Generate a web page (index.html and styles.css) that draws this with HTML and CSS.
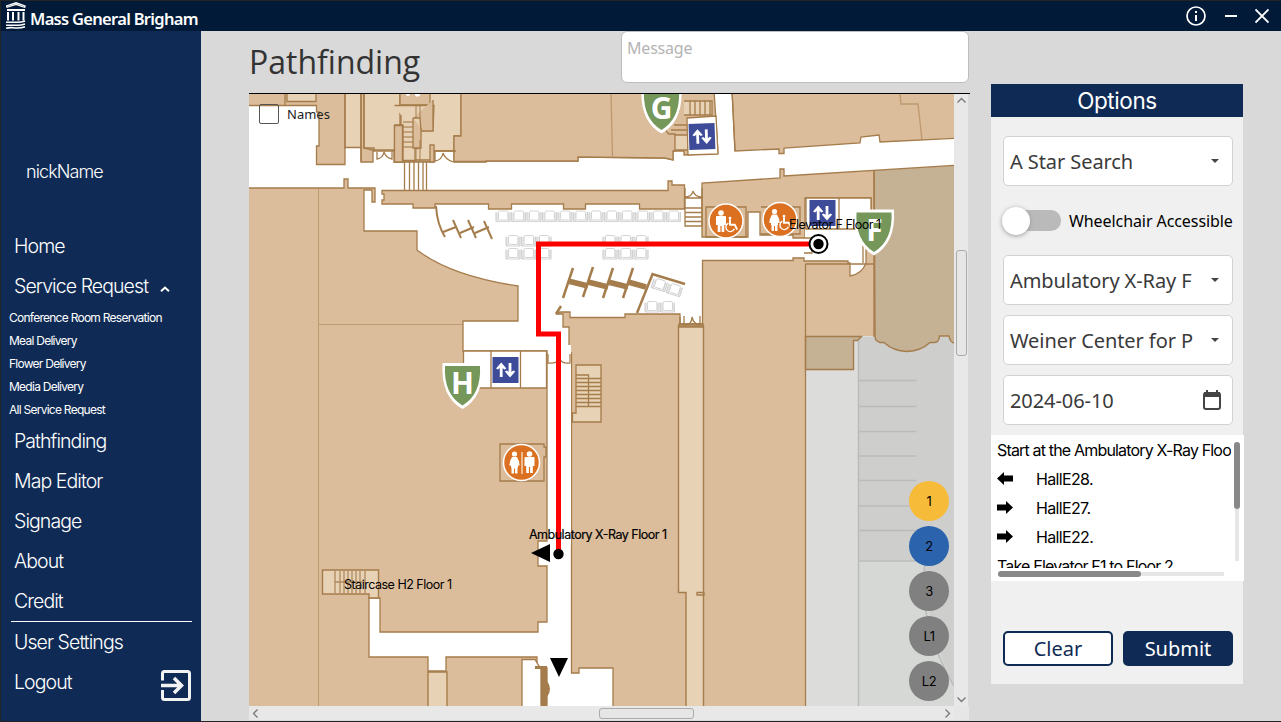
FILE: index.html
```html
<!DOCTYPE html>
<html lang="en">
<head>
<meta charset="utf-8">
<title>Pathfinding</title>
<link rel="stylesheet" href="styles.css">
</head>
<body>
<div class="window">
  <header class="titlebar">
    <svg class="logo" width="20" height="28" viewBox="0 0 20 28" fill="#fff" stroke="#fff"><path d="M0.5 5V4L10 .8 19 4v1.5M.5 5.500 10 2.500l9 3" fill="none" stroke-width="1.3"/><path d="M1 7h18v2H1zM1 10h2v8.500H1zM6 10h2v8.500H6zM11.500 10h2v8.500h-2zM16.500 10h2v8.500h-2z" stroke="none"/><path d="M0 20.300h12q3 0 7-1.200M0 23.200h12q3 0 7-1.200M0 26.300q3-1 7-.6 7 .8 12-1" fill="none" stroke-width="1.6"/></svg>
    <span class="brand">Mass General Brigham</span>
    <div class="controls">
      <svg width="20" height="20" viewBox="0 0 20 20"><circle cx="10" cy="10" r="9" fill="none" stroke="#fff" stroke-width="1.7"/><path d="M9 5h2v2H9zM9 9h2v6H9z" fill="#fff"/></svg>
      <svg width="12" height="20" viewBox="0 0 12 20"><path d="M0 9h12v2H0z" fill="#fff"/></svg>
      <svg width="14" height="20" viewBox="0 0 14 20"><path d="M.5 3.500l13 13M13.500 3.500l-13 13" stroke="#fff" stroke-width="1.8"/></svg>
    </div>
  </header>
  <div class="body">
    <nav class="sidebar">
      <div class="nick">nickName</div>
      <a class="item">Home</a>
      <a class="item service">Service Request<svg width="10" height="6" viewBox="0 0 10 6"><path d="M1 5.300 5 1.500l4 3.800" fill="none" stroke="#fff" stroke-width="1.900"/></svg></a>
      <div class="subs">
        <a class="sub">Conference Room Reservation</a>
        <a class="sub">Meal Delivery</a>
        <a class="sub">Flower Delivery</a>
        <a class="sub">Media Delivery</a>
        <a class="sub">All Service Request</a>
      </div>
      <a class="item">Pathfinding</a>
      <a class="item">Map Editor</a>
      <a class="item">Signage</a>
      <a class="item">About</a>
      <a class="item">Credit</a>
      <hr class="rule">
      <a class="item">User Settings</a>
      <a class="item logout">Logout<svg width="30" height="31" viewBox="0 0 30 31" fill="none" stroke="#f3f3f3" stroke-width="3"><path d="M1.500 10.500v-7q0-2 2-2h23q2 0 2 2v24q0 2-2 2h-23q-2 0-2-2v-7.500"/><path d="M0 15.500h20M13 8l7.500 7.500L13 23" stroke-width="3.500"/></svg></a>
    </nav>
    <main class="center">
      <div class="heading">
        <h1>Pathfinding</h1>
        <div class="message">Message</div>
      </div>
      <section class="mapframe">
        <div class="mapview">
          <svg class="map" width="705" height="612" viewBox="249 94 705 612">
            <defs>
              <g id="seat" fill="none" stroke="#cfcfcf" stroke-width=".9"><path d="M0 2h3v8H0zM12 2h3v8h-3z" fill="#e6e6e6" stroke="none"/><rect x="3" y=".5" width="9.500" height="9" rx="1.500"/><path d="M.5 1.500v9.500h14V1.500M3 9.500l-2 1.500M12.500 9.500l2 1.500"/></g>
              <g id="lift"><rect width="26" height="26" fill="#3d4b99"/><path d="M8.700 20V9M17.500 6v11" stroke="#fff" stroke-width="2.800"/><path d="M3.500 11.500 8.700 5.500l5.200 6-2 1-3.200-2.500-3.200 2.500zM12.300 14.500l5.200 6 5.200-6-2-1-3.200 2.500-3.200-2.500z" fill="#fff"/></g>
              <g id="shield"><path d="M-20-22H20Q22 12 0 24Q-22 12-20-22z" fill="#fff"/><path d="M-17.500-19H17.500Q19 9 0 20.500Q-19 9-17.500-19z" fill="#75975a"/></g>
              <g id="man" fill="#fff"><circle r="2.800"/><path d="M-5 4q0-1 1-1h8q1 0 1 1v8h-1.700v7H.6v-6h-1.200v6h-2.700v-7H-5z"/></g>
              <g id="woman" fill="#fff"><circle r="2.600"/><path d="M-2.500 3h5q2.500 4 2.700 8.500H3.500v2H3v6H.5v-5h-1v5H-3v-6h-.5v-2h-1.700Q-5 7-2.500 3z"/></g>
              <g id="chair"><path d="M0-6v7h6l3 6" fill="none" stroke="#fff" stroke-width="2.400"/><circle cx="0" cy="-7.500" r="1.700" fill="#fff"/><path d="M-2-1a5.500 5.500 0 1 0 7.500 7" fill="none" stroke="#fff" stroke-width="1.700"/></g>
            </defs>
            <rect x="249" y="94" width="705" height="612" fill="#dbbc9b"/>
            <path d="M318.500 188V706M318 324.500h146" stroke="#bd9c73" fill="none"/>
            <path class="grey" d="M805 336h149V706H805z"/>
            <path fill="#cececd" d="M858 337h96V706h-96z"/>
            <path fill="#d5d8d5" d="M858.500 560.500H925q-1 65 29 124V706h-95.500z"/>
            <path d="M858.500 341V706M858.500 380.500h58M858.500 406.500h58M858.500 431.500h58M858.500 456h58M858.500 480.500h58M858.500 506h55M858.500 530.500h57M858.500 561h65M925 562q-8 60 29 124" fill="none" stroke="#babcba" stroke-width="1.500"/>
            <path class="khaki wallline" d="M874 160H960V343h-6q-4-1-5-7h-9.500q-.5 7-5.500 6.500h-4q-9 8.500-23 9-14-.5-23-9h-4q-5-1.500-5-6.500z"/>
            <path class="khaki wallline" d="M805.500 336.500h56l-4 4h-4v29h-48z"/>
            <g class="wall">
              <path class="cream" d="M287 90h29v11.500h-29zM345 90h16v58h-16zM364 90h36v35h-5v26h-19l-12-3zM402 90h59v46h-7v15h-22v11h-30z"/>
            </g>
            <path class="white" d="M243 105.500H316.500V112H319V146H316.500V164.500H345V147.500H361V162H373V150H394V162H434V151H454V162H486V161H578V157L665 158 673 160V151H684V155L718 153 714 90H732L735 151 779 149V153.500H784V148L860 143 861 137 879 135 880 142 960 138V165L784 176V169H780V178L702 183V237H748V212H760V235H793V238H805V198H871V229H866V263Q862 274 850 276V263H848V261H804V258H793V260.500H702.500V324H680V314H625V317.500H570V312H560L556 314H563V327H569V353H571.500V673H579V668H613V712H547V668H537V657H446V671H428V657H369V598H380V632H538V622H547V566H538V541H547V351H463V321H518V286Q451 276 417 250V231H364V190H372V202H375V188H348V179H344V188H243Z"/>
            <path class="wall" d="M382 190.500H668V181h4v4h12.500v24h-45v-5h-54v5h-22v-5h-52v5h-23v-5H435v4h-22v-4h-31v-4h2v-6h-2z"/>
            <path class="stroke" d="M285 94v11M345 94v53M361 94v68M364 94v54h10v3M394.500 125v37h8v-37M402.500 94v68M402.500 160h28v2M732 90l3 61"/>
            <path class="stroke cream" d="M671 135h17v15h-17zM671 130h16M674 125h13M684 101h28v14h-28M690 101v14M695 101v14M700 101v14M705 101v14M710 101v14"/>
            <path class="wall" d="M400 94v11h30V94"/>
            <circle cx="408" cy="94" r="2" fill="#fff"/><circle cx="417.500" cy="94" r="2.600" fill="#fff"/>
            <path class="stroke cream" d="M394.500 105.500h39.500l-1 25h-15v18h-3v12h-12V125h-2v-10"/>
            <path class="wall" d="M413 118h7l1 13h12v-31M413 118v30h8v-20M394.500 125.500h8v36.500h-8zM430 145h4v17h-4z"/>
            <path class="wall" d="M461 90V136h-7v25.500h32V161h92v-4l87 1 8 2v-9h2v-17h-6l-3-3V90z"/>
            <path class="stroke" d="M611 94l1.500 62M900 94l1 10h17l4 36" opacity=".55"/>
            <path class="stroke" d="M403 122h10M403 127h10M403 132h10M403 137h10M403 142h10M403 147h10M416 105v13M420 105v13M416 149v12M420 140v21" opacity=".75"/>
            <path class="stroke" d="M404.500 162v28M409.500 162v28M414 162v28M418.500 162v28M423 162v28M426.500 162v28"/>
            <path class="stroke" d="M373 151h22M377 152v7q6-1 7-7q2 6 8 7v-8M434 151h22M435 152v9q7-1 8-8q2 6 10 9"/>
            <path class="stroke thick" d="M436 206q1 18 9 31M453 220l8 18M468 220l8 18M484 221l8 18M443 232l13-5M460 233l14-6M475 233l14-6"/>
            <path class="white" d="M687 118l29-2 2 38-30 1z"/>
            <path class="stroke" d="M685 198v28h17v-28zM685 208h17M685 212.500h17M685 217h17M685 221.500h17M685 188v9q7 0 8-6q2 6 9 6v-9"/>
            <path fill="#fff" d="M805 229h60v31h-60z"/>
            <path class="white" d="M806 198h65v31h-65zM839 198v31"/>
            <path class="stroke" d="M874 171V337M805.500 264H874M805.500 264V706M706 207h40v30h-40zM761 207h39v27h-39M804 253h8v-5M805 238h7v5M865 229v16h-2v18"/>
            <path class="white" d="M463.500 351h83v37h-83zM491 351v37M520.500 351v37"/>
            <path fill="#fff" d="M548 345h23v200h-23z"/>
            <path class="stroke" d="M548 354v9q9 1 11-4M570 354v9q-8 1-10-4M680 324v-7M684 316v9q8 0 8-8q2 8 8 8v-9"/>
            <path class="stroke cream" d="M576 365h25v57h-28.500v-9h3.500zM576 375h12.500v32M576 378.500h25M576 382.500h25M576 386.500h25M576 390.500h25M576 394.500h25M576 398.500h25M576 402.500h25M576 406.500h25"/>
            <path class="cream wallline" d="M678.500 326h25v386H686V592.500h-7.500z"/>
            <path class="stroke" d="M679 324h24v3h-24zM697 592.500h7v2.500h-7z"/>
            <path class="stroke" d="M500 444h44v3h2v10h-2v24h-44z"/>
            <path class="cream wallline" d="M322.500 570h56v28h-9.500v-4h-46.500zM428 672h19v40h-19z"/>
            <path class="stroke" d="M335 571v22M340 571v22M344 571v22M348 571v22M352 571v22M356 571v22M360 571v22M365 571v22M335 582h30" opacity=".85"/>
            <path class="white" d="M522 659.500h13l6 10v43h-19z"/>
            <path fill="#a57c4b" d="M535 666h12v15q6 8 0 16v9h-6v-37h-6z"/>
            <path d="M573 268l-10 30M593 267l-10 30M613 268l-10 30M633 268l-10 30M653 273l-16 40M652 274l33 10M556 314l5-8" fill="none" stroke="#a57c4b" stroke-width="2.500"/>
            <path d="M568 281l20 5M588 282l20 5M608 282l20 5M628 282l18 5" stroke="#a57c4b" stroke-width="5.500"/>
            <g><use href="#seat" x="495.500" y="210.500"/><use href="#seat" x="511" y="210.500"/><use href="#seat" x="526.500" y="210.500"/><use href="#seat" x="542" y="210.500"/><use href="#seat" x="557.500" y="210.500"/><use href="#seat" x="573" y="210.500"/><use href="#seat" x="588.500" y="210.500"/><use href="#seat" x="604" y="210.500"/><use href="#seat" x="619.500" y="210.500"/><use href="#seat" x="635" y="210.500"/><use href="#seat" x="650.500" y="210.500"/><use href="#seat" x="666" y="210.500"/>
            <use href="#seat" x="505.500" y="235"/><use href="#seat" x="521" y="235"/><use href="#seat" x="536.500" y="235"/><use href="#seat" x="505.500" y="248"/><use href="#seat" x="521" y="248"/><use href="#seat" x="536.500" y="248"/><use href="#seat" x="602.500" y="235"/><use href="#seat" x="618" y="235"/><use href="#seat" x="633.500" y="235"/><use href="#seat" x="602.500" y="248"/><use href="#seat" x="618" y="248"/><use href="#seat" x="633.500" y="248"/><use href="#seat" x="644.500" y="301"/><use href="#seat" x="660" y="301"/><use href="#seat" transform="translate(654 277) rotate(17)"/><use href="#seat" transform="translate(669 282) rotate(17)"/></g>
            <use href="#lift" transform="translate(688.500 124) rotate(-2)"/><use href="#lift" x="809.500" y="200"/><use href="#lift" x="492.500" y="357"/>
            <g stroke="#fff" stroke-width="1.500" fill="#db7020"><circle cx="726" cy="221" r="17"/><circle cx="780" cy="219.500" r="17"/><circle cx="521.500" cy="462.500" r="18"/></g>
            <use href="#man" x="721" y="213"/><use href="#woman" x="774.500" y="211.500"/><use href="#chair" transform="translate(730 224) scale(.8)"/><use href="#chair" transform="translate(784 222) scale(.8)"/>
            <use href="#woman" x="514.500" y="454"/><use href="#man" x="529.500" y="454"/><path d="M522 452v22" stroke="#f2c9a4" stroke-width="1.700"/>
            <use href="#shield" x="661.500" y="109.500"/><use href="#shield" x="874" y="231.500"/><use href="#shield" x="462.500" y="385"/>
            <g class="shieldtext"><text x="661.500" y="119">G</text><text x="874.500" y="241">F</text><text x="462.500" y="394">H</text></g>
            <path d="M558.500 553V334H538.500V244H818" fill="none" stroke="#f00" stroke-width="5"/>
            <circle cx="818.500" cy="244" r="9" fill="#fff" stroke="#000" stroke-width="2"/><circle cx="818.500" cy="244" r="5.200"/>
            <circle cx="558.500" cy="554" r="5.200"/>
            <path d="M531 553l19-9v18zM550 658h18l-9 19z"/>
            <g class="labels"><text x="789" y="229" textLength="92">Elevator F Floor 1</text><text class="strong" x="529" y="539" textLength="138">Ambulatory X-Ray Floor 1</text><text x="344" y="589" textLength="108">Staircase H2 Floor 1</text></g>
          </svg>
          <label class="names"><span class="check"></span>Names</label>
          <div class="floors"><b class="f1">1</b><b class="f2">2</b><b>3</b><b>L1</b><b>L2</b></div>
        </div>
        <div class="vscroll"><svg width="9" height="6" viewBox="0 0 9 6"><path d="M.5 5.500l4-4 4 4"/></svg><span></span><svg class="end" width="9" height="6" viewBox="0 0 9 6"><path d="M.5.5l4 4 4-4"/></svg></div>
        <div class="hscroll"><svg width="6" height="9" viewBox="0 0 6 9"><path d="M5.500.5l-4 4 4 4"/></svg><span></span><svg class="end" width="6" height="9" viewBox="0 0 6 9"><path d="M.5.5l4 4-4 4"/></svg></div>
        <div class="corner"></div>
      </section>
    </main>
    <aside class="options">
      <h2>Options</h2>
      <div class="select"><span>A Star Search</span><i></i></div>
      <div class="toggle"><span class="track"><span class="knob"></span></span><span class="wheel">Wheelchair Accessible</span></div>
      <div class="select"><span>Ambulatory X-Ray F</span><i></i></div>
      <div class="select"><span>Weiner Center for P</span><i></i></div>
      <div class="select date"><span>2024-06-10</span><svg width="18" height="20" viewBox="0 0 18 20"><path d="M3 0h2v3H3zM13 0h2v3h-2z" fill="#444"/><rect x="1" y="3" width="16" height="16" rx="2" fill="none" stroke="#444" stroke-width="2"/><path d="M1 2h16v5H1z" fill="#444"/></svg></div>
      <div class="steps">
        <div class="list">
          <p><span>Start at the Ambulatory X-Ray Floor 1</span></p>
          <p><svg width="16" height="13" viewBox="0 0 16 13"><path d="M0 6.500 7 0v3.500h9v6H7V13z"/></svg><span>HallE28.</span></p>
          <p><svg width="16" height="13" viewBox="0 0 16 13"><path d="M16 6.500 9 0v3.500H0v6h9V13z"/></svg><span>HallE27.</span></p>
          <p><svg width="16" height="13" viewBox="0 0 16 13"><path d="M16 6.500 9 0v3.500H0v6h9V13z"/></svg><span>HallE22.</span></p>
          <p><span>Take Elevator F1 to Floor 2</span></p>
        </div>
        <div class="vbar"><span></span></div>
        <div class="hbar"><span></span></div>
      </div>
      <div class="actions"><button class="clear">Clear</button><button class="submit">Submit</button></div>
    </aside>
  </div>
</div>
</body>
</html>
```
FILE: styles.css
```css
* { box-sizing: border-box; }
body { margin: 0; overflow: hidden; font-family: Inter, sans-serif; }
.window { width: 1281px; height: 722px; border: 1px solid #222426; border-right: 0; background: #d9d9d9; display: flex; flex-direction: column; }
.titlebar { height: 30px; flex: none; background: #001a38; display: flex; align-items: center; padding: 0 12px 0 5px; color: #fff; }
.brand { font: 600 16.500px "Noto Sans", sans-serif; letter-spacing: -.7px; margin: 4px 0 0 4px; white-space: nowrap; }
.controls { margin-left: auto; display: flex; gap: 18.500px; align-items: center; }
.controls svg { display: block; }
.body { display: flex; height: 690px; }
.sidebar { width: 200px; flex: none; background: #0f2b55; color: #fff; padding-top: 121px; }
.nick { height: 40px; line-height: 40px; padding-left: 25px; font-size: 18px; font-weight: 300; margin-bottom: 34px; letter-spacing: -.9px; }
.item { display: flex; align-items: center; height: 40px; padding-left: 13px; font-size: 19.500px; letter-spacing: -.92px; font-weight: 350; }
.service svg { margin: 5px 0 0 12px; }
.sub { display: block; height: 23px; line-height: 23px; padding-left: 8px; font-size: 12px; letter-spacing: -.74px; font-weight: 400; }
.rule { width: 181px; height: 1px; border: 0; margin: 0 0 0 10px; background: #fff; }
.logout { justify-content: space-between; padding-right: 10px; }
.logout svg { margin-top: 6px; }
.center { width: 721px; margin-left: 48px; flex: none; }
.heading { display: flex; height: 62px; justify-content: space-between; padding-right: 1px; }
h1 { margin: 8px 0 0; font: 400 32px/46px "Open Sans", sans-serif; color: #333; }
.message { width: 348px; height: 52px; border: 1px solid #bdbdbd; border-radius: 6px; background: #fff; color: #b4b4b4; padding: 5px; font: 16px/23px "Noto Sans", sans-serif; letter-spacing: -.2px; }
.mapframe { display: grid; grid-template-columns: 705px 15px; grid-template-rows: 612px 14px; border-top: 1px solid #000; width: 721px; }
.mapview { position: relative; }
.map { display: block; }
.white { fill: #fff; stroke: #a57c4b; stroke-width: 1.3; }
.wall { fill: #dbbc9b; stroke: #a57c4b; stroke-width: 1.3; }
.cream { fill: #e8d2b5; }
.grey { fill: #dcdcda; }
.khaki { fill: #c5b194; }
.wallline { stroke: #a57c4b; stroke-width: 1.4; }
.stroke { stroke: #a57c4b; stroke-width: 1.3; }
.stroke:not(.cream) { fill: none; }
.thick { stroke-width: 2; }
.shieldtext { font: 700 30px "Noto Sans", sans-serif; fill: #fff; text-anchor: middle; }
.labels { font: 400 12.500px Inter, sans-serif; fill: #000; }
.strong { stroke: #000; stroke-width: .2; }
.names { position: absolute; left: 10px; top: 10px; display: flex; align-items: center; gap: 8px; font: 13px/20px "Noto Sans", sans-serif; color: #222; }
.check { width: 20px; height: 20px; border: 1.500px solid #555; border-radius: 2px; }
.floors { position: absolute; right: 5px; top: 387px; display: flex; flex-direction: column; gap: 5px; }
.floors b { width: 40px; height: 40px; border-radius: 50%; background: #808080; text-align: center; font: 400 13px/40px Inter, sans-serif; letter-spacing: -.4px; }
.floors .f1 { background: #f6bb38; }
.floors .f2 { background: #2b63ad; }
.vscroll, .hscroll { display: flex; align-items: center; background: #e8e8e8; }
.vscroll { flex-direction: column; padding: 3px 0; width: 14px; }
.vscroll svg, .hscroll svg { flex: none; fill: none; stroke: #777; stroke-width: 1.300; }
.vscroll span { width: 11px; height: 106px; margin-top: 147px; }
.vscroll span, .hscroll span { border: 1px solid #aaa; border-radius: 3px; background: #e6e6e6; }
.hscroll { padding: 0 3px; }
.hscroll span { width: 95px; height: 11px; margin-left: 341px; }
.vscroll .end { margin-top: auto; }
.hscroll .end { margin-left: auto; }
.corner { background: #e6e6e6; }
.options { margin: 53px 0 0 21px; width: 252px; height: 600px; background: #f0f0f0; flex: none; }
h2 { margin: 0 0 19px; height: 33px; background: #0f2b55; color: #fff; text-align: center; font: 400 22.500px/34px Inter, sans-serif; letter-spacing: -.4px; }
.select { margin: 0 10px 10px 12px; height: 50px; border: 1px solid #d2d2d2; border-radius: 5px; background: #fff; color: #3a3a3a; display: flex; align-items: center; justify-content: space-between; padding: 0 13px 0 6px; font: 20px "Noto Sans", sans-serif; letter-spacing: -.08px; white-space: nowrap; }
.select i { border: 4px solid transparent; border-top-color: #444; border-bottom: 0; }
.date { padding-right: 11px; }
.toggle { height: 69px; margin-top: -10px; padding-left: 14px; display: flex; align-items: center; }
.track { width: 56px; height: 21px; background: #bababa; border-radius: 10px; display: flex; align-items: center; }
.knob { width: 28px; height: 28px; border-radius: 50%; background: #fff; margin-left: -3px; box-shadow: 0 1px 4px #999; flex: none; }
.wheel { font: 16px "Noto Sans", sans-serif; margin-left: 8px; white-space: nowrap; letter-spacing: -.08px; }
.steps { width: 253px; height: 146px; background: #fff; padding: 0 4px 0 6px; display: grid; grid-template-columns: 234px 9px; grid-template-rows: 133px 13px; }
.list { overflow: hidden; font-size: 16px; letter-spacing: -.83px; }
.list p { margin: 0; height: 29px; display: flex; align-items: center; white-space: nowrap; }
.list p:has(svg) { letter-spacing: -.65px; }
.list svg { margin-right: 23px; flex: none; }
.vbar { padding-top: 7px; }
.vbar::after { content: ""; display: block; width: 4px; height: 52px; margin-left: 4px; background: #e6e6e6; }
.vbar span { display: block; width: 6px; height: 67px; margin-left: 3px; background: #888; border-radius: 3px; }
.hbar { margin: 3px 0 0 1px; width: 226px; height: 6px; background: linear-gradient(transparent 1px, #e6e6e6 1px 5px, transparent 5px); }
.hbar span { display: block; height: 6px; width: 143px; background: #888; border-radius: 3px; }
.actions { display: flex; gap: 10px; margin: 50px 10px 0 12px; }
.actions button { width: 110px; height: 35px; border: 2px solid #0f2b55; border-radius: 5px; padding: 0; font: 20px/30px "Noto Sans", sans-serif; }
.clear { background: #fff; color: #0f2b55; }
.submit { background: #0f2b55; color: #fff; }
```
